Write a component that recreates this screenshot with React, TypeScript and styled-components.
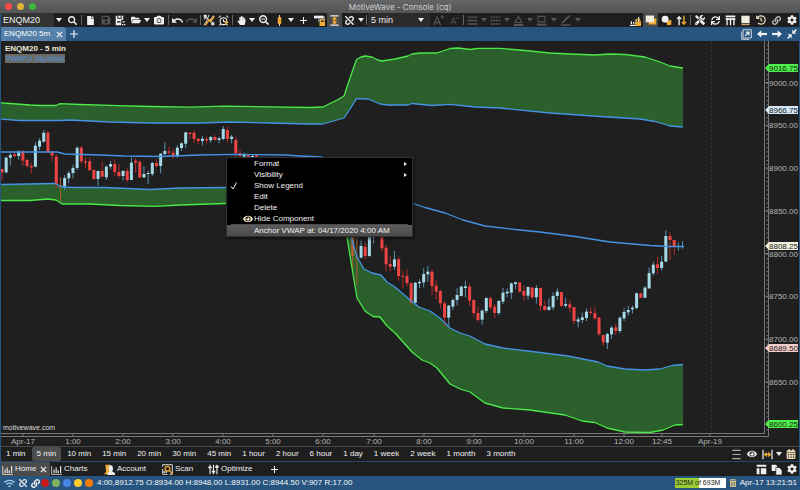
import React from "react";
import styled, { createGlobalStyle } from "styled-components";
import {
  FaSearch, FaSearchMinus, FaFile, FaSave, FaFolderOpen, FaCamera, FaHandPaper, FaTools,
  FaSync, FaHistory, FaLink, FaUnlink, FaCog, FaEye, FaTrashAlt, FaWifi, FaCalendarAlt,
} from "react-icons/fa";
import { MdUndo, MdRedo } from "react-icons/md";

const GlobalStyle = createGlobalStyle`
  * { box-sizing: border-box; }
  html, body { margin: 0; background: #1f1f1f; }
  body, button, input, select { font-family: "Liberation Sans", Arial, sans-serif; font-size: 8px; line-height: 10px; color: #f0f0f0; }
  button { border: 0; padding: 0; background: none; }
`;

const BLUE = "#28557f";
const AMBER = "#f0ab35";

const Window = styled.div`
  display: flex;
  flex-direction: column;
  min-height: 100vh;
  overflow: hidden;
`;

const TitleBar = styled.header`
  display: grid;
  grid-template-columns: 1fr auto 1fr;
  align-items: center;
  height: 13px;
  padding: 0 5px;
  background: linear-gradient(#636567, #525456);
`;

const TrafficLights = styled.div`
  display: flex;
  gap: 5px;
`;

const Light = styled.button<{ $color: string }>`
  width: 7px;
  height: 7px;
  border-radius: 50%;
  background: ${(p) => p.$color};
`;

const Title = styled.h1`
  margin: 0;
  font: 400 8px/12px Inter, sans-serif;
  color: #d0d0d0;
`;

const Body = styled.main`
  flex: 1;
  display: flex;
  flex-direction: column;
  border: solid ${BLUE};
  border-width: 0 1px;
`;

const Bar = styled.div<{ $height: number; $bg?: string; $line?: string }>`
  display: flex;
  align-items: stretch;
  flex: none;
  height: ${(p) => p.$height}px;
  background: ${(p) => p.$bg ?? "#1e1e1e"};
  border-top: ${(p) => (p.$line ? `1px solid ${p.$line}` : "0")};
`;

const Spacer = styled.div`
  flex: 1;
`;

const ToolButton = styled.button<{ $w?: number; $active?: boolean; $dim?: boolean }>`
  display: flex;
  align-items: center;
  justify-content: center;
  flex: none;
  width: ${(p) => p.$w ?? 15}px;
  background: ${(p) => (p.$active ? "#4b4b4b" : "none")};
  color: ${(p) => (p.$dim ? "#555" : "#f0f0f0")};
`;

const Divider = styled.span`
  flex: none;
  width: 1px;
  margin: 2px 1px;
  background: #666;
`;

const SymbolInput = styled.input`
  width: 53px;
  border: 0;
  padding: 0 2px;
  background: #333;
  font-size: 9px;
`;

const SelectWrap = styled.label`
  display: grid;
  grid-template-columns: 1fr 12px;
  align-items: center;
  width: 62px;
  background: #2b2b2b;
`;

const Select = styled.select`
  grid-area: 1 / 1 / 2 / 3;
  appearance: none;
  border: 0;
  padding: 0 3px;
  height: 14px;
  background: transparent;
  font-size: 9px;
`;

const SelectCaret = styled.span`
  grid-area: 1 / 2;
  display: flex;
  pointer-events: none;
`;

const DocTab = styled.div`
  display: flex;
  align-items: center;
  justify-content: space-between;
  width: 65px;
  padding: 0 3px;
  background: #5580a9;
  border-radius: 0 3px 0 0;
`;

const TabLabel = styled.button`
  color: #fff;
`;

const CloseButton = styled.button`
  display: flex;
  align-items: center;
`;

const ChartPane = styled.section`
  position: relative;
  background: #1f1f1f;
`;

const ChartSvg = styled.svg`
  display: block;
  width: 100%;
  height: auto;
`;

const Legend = styled.div`
  position: absolute;
  left: 4px;
  top: 3px;
  display: flex;
  flex-direction: column;
  align-items: flex-start;
`;

const LegendTitle = styled.strong`
  color: #eee8d8;
`;

const LegendStudy = styled.span`
  padding: 0 1px;
  font-size: 7px;
  line-height: 9px;
  background: #6b6b64;
  color: #4a90dd;
`;

const Menu = styled.ul`
  position: absolute;
  left: 225px;
  top: 116px;
  width: 187px;
  margin: 0;
  padding: 0;
  list-style: none;
  background: #000;
  border: 1px solid #303030;
  box-shadow: 1px 2px 3px #0008;
`;

const MenuSeparator = styled.li`
  height: 1px;
  margin: 0 4px;
  background: #4c4c4c;
`;

const MenuButton = styled.button<{ $hot?: boolean }>`
  display: grid;
  grid-template-columns: 14px 13px 1fr 8px;
  align-items: center;
  width: 100%;
  height: 11px;
  text-align: left;
  background: ${(p) => (p.$hot ? "linear-gradient(#5c5c5c, #4a4a4a)" : "none")};
`;

const MenuIcon = styled.span`
  display: flex;
  justify-content: center;
`;

const FrameButton = styled.button<{ $active?: boolean }>`
  padding: 0 5px;
  margin-right: 1px;
  border-radius: 2px;
  color: #f0f0f0;
  background: ${(p) => (p.$active ? "#4d4d4d" : "none")};
`;

const PageTab = styled.div<{ $w: number; $active?: boolean }>`
  display: flex;
  align-items: center;
  gap: 2px;
  width: ${(p) => p.$w}px;
  padding: 0 3px 0 1px;
  background: ${(p) => (p.$active ? "#4b4b4b" : "none")};
`;

const PageTabLabel = styled.button`
  flex: 1;
  display: flex;
  align-items: center;
  gap: 2px;
`;

const Dots = styled.div`
  display: flex;
  align-items: center;
  gap: 3px;
  margin-right: 4px;
`;

const Dot = styled.button<{ $color: string }>`
  width: 8px;
  height: 8px;
  border-radius: 50%;
  background: ${(p) => p.$color};
`;

const StatusText = styled.span`
  align-self: center;
  padding-right: 2px;
  white-space: nowrap;
  color: #f4f7fa;
`;

const Memory = styled.div`
  align-self: center;
  width: 51px;
  height: 10px;
  padding-left: 1px;
  font-size: 7px;
  color: #222;
  background: linear-gradient(90deg, #9acd32 47%, #fff 47%);
`;

/* ---------- icons ---------- */

const Glyph = ({ size = 11, children }: { size?: number; children: React.ReactNode }) => (
  <svg width={size} height={size} viewBox="0 0 16 16" fill="none" stroke="currentColor" strokeWidth="2" aria-hidden>
    {children}
  </svg>
);

const Caret = () => (
  <svg width="6" height="4" viewBox="0 0 6 4" fill="currentColor" aria-hidden><path d="M0 0H6L3 4Z" /></svg>
);
const Cross = () => <Glyph size={7}><path d="M2 2L14 14M14 2L2 14" strokeWidth="3" /></Glyph>;
const Plus = ({ size = 8 }: { size?: number }) => <Glyph size={size}><path d="M8 0V16M0 8H16" strokeWidth="2.4" /></Glyph>;
const Lock = () => (
  <>
    <path d="M9.5 11V8.5a2.5 2.5 0 0 1 5 0V11" stroke={AMBER} strokeWidth="1.6" />
    <path d="M8 10h8v6H8z" fill={AMBER} stroke="none" />
  </>
);
const SaveAs = () => (
  <Glyph>
    <path d="M1 1h11v6H9v8H1z" fill="currentColor" stroke="none" />
    <path d="M4 1v4h5V1" stroke="#1e1e1e" strokeWidth="1.4" />
    <path d="M3 10h5" stroke="#1e1e1e" />
    <path d="M10 14h2M13 14h2M11 10h3" />
  </Glyph>
);
const Wand = () => (
  <Glyph size={12}>
    <path d="M1 2L15 13M1 7L5 5M8 1L5 9L1 15M14 2L9 9" stroke="#ddd" strokeWidth="1.3" />
    <path d="M3 15L8 8L10 10L15 3" stroke={AMBER} strokeWidth="2" />
    <path d="M1 1h4v4H1zM11 11h4v4h-4z" fill="#ddd" stroke="none" />
  </Glyph>
);
const Alarm = () => (
  <Glyph>
    <circle cx="8" cy="9" r="5" strokeWidth="1.5" />
    <path d="M8 6V9.5H11M1 4L4 1M12 1L15 4M4 13L2 15M12 13L14 15" strokeWidth="1.5" />
    <path d="M12 8v6M9.5 11H15" stroke={AMBER} strokeWidth="1.6" />
  </Glyph>
);
const CandleIcon = () => (
  <Glyph><path d="M8 0V16" stroke="#ddd" strokeWidth="1.4" /><path d="M5.5 3h5v10h-5z" fill={AMBER} stroke="none" /></Glyph>
);
const PaintLock = () => (
  <Glyph>
    <path d="M0 1h14v4H0z" fill="#eee" stroke="none" />
    <path d="M14 3h2v4H7v3" stroke="#ddd" strokeWidth="1.4" />
    <Lock />
  </Glyph>
);
const FitVertical = () => (
  <Glyph>
    <path d="M2 1.2H14M2 14.8H14" strokeWidth="1.8" />
    <path d="M8 4V12" stroke={AMBER} strokeWidth="2.4" />
    <path d="M8 2L12 6.5H4ZM8 14L12 9.5H4Z" fill={AMBER} stroke="none" />
  </Glyph>
);
const Lines = ({ dash }: { dash?: string }) => (
  <Glyph><path d="M1 3H15M1 8H15M1 13H15" strokeDasharray={dash} /></Glyph>
);
const Triangle = () => <Glyph><path d="M8 2L13 11H3Z" strokeWidth="1.6" /><path d="M1 14.5H15" strokeWidth="3" /></Glyph>;
const FillBox = () => <Glyph><path d="M3 2h10v8H3z" strokeWidth="1.6" /><path d="M1 14H15" strokeWidth="3" /></Glyph>;
const Pen = () => <Glyph><path d="M14 1L6 9L3 12" strokeWidth="2.5" /><path d="M1 14.5H15" strokeWidth="2" /></Glyph>;
const BarsIcon = () => (
  <Glyph><path d="M1 3V15H16" strokeWidth="1.2" /><path d="M4.5 13V8M7.5 13V5M10.5 13V9M14 13V3" strokeWidth="1.6" /></Glyph>
);
const BarsLock = () => (
  <Glyph><path d="M0 15H16M2 13V9M5.5 13V10M9 13V6M12.5 13V3" strokeWidth="1.8" /><Lock /></Glyph>
);
const Stack = () => (
  <Glyph size={12}>
    <path d="M5 6h10v8H5z" fill={AMBER} stroke="none" />
    <path d="M1 2h11v9H1z" fill="#f0ece0" stroke="none" />
  </Glyph>
);
const Shapes = () => (
  <Glyph>
    <path d="M8 9l7-2v7l-6 1z" fill={AMBER} stroke="none" />
    <circle cx="6" cy="6" r="5" fill="#eee" stroke="none" />
  </Glyph>
);
const UpDown = () => (
  <Glyph>
    <path d="M4.5 15V3M1.5 6L4.5 2.5L7.5 6" />
    <path d="M11.5 1V13M8.5 10L11.5 13.5L14.5 10" stroke={AMBER} />
  </Glyph>
);
const Columns = () => <Glyph><path d="M1 2H15M1 6H15" strokeWidth="2.2" /><path d="M3 4V15M8 4V15M13 4V15" strokeWidth="2" /></Glyph>;
const Page = () => (
  <Glyph><path d="M2 1h12v11H2z" fill="#f0ece0" stroke="none" /><path d="M2 14H14" stroke="#d8b070" strokeWidth="1.6" /></Glyph>
);
const PopOut = () => <Glyph><path d="M3 1h12v12H3zM1 4V15H12" strokeWidth="1.2" /><path d="M6 10L11 5M7 4.5H11.5V9" strokeWidth="1.8" /></Glyph>;
const Arrow = ({ left }: { left?: boolean }) => (
  <Glyph size={10}>
    <path d={left ? "M16 8H4" : "M0 8H12"} strokeWidth="3.5" />
    <path d={left ? "M7 2L0 8L7 14Z" : "M9 2L16 8L9 14Z"} fill="currentColor" stroke="none" />
  </Glyph>
);
const Collapse = () => (
  <Glyph size={10}>
    <path d="M15 1L10 6M1 15L6 10" strokeWidth="2.4" />
    <path d="M8.5 1V7.5H15ZM7.5 15V8.5H1Z" fill="currentColor" stroke="none" />
  </Glyph>
);
const FitWidth = () => (
  <Glyph>
    <path d="M1.5 1V15M14.5 1V15" strokeWidth="1.8" />
    <path d="M4 8H12" stroke={AMBER} />
    <path d="M2.5 8L7 4V12ZM13.5 8L9 4V12Z" fill={AMBER} stroke="none" />
  </Glyph>
);
const Bust = () => (
  <Glyph>
    <path d="M2 1h7v10l3 4H0l3-4z" fill={AMBER} stroke="none" />
    <path d="M8 2c3-1 5 1 5 4s-1 4-1 5l4 2v3H5v-3l3-2c-1-3-2-7 0-9z" fill="#eee" stroke="none" />
  </Glyph>
);
const ScanIcon = () => (
  <Glyph>
    <path d="M1 4V1H15V15H11M1 7V15H8" strokeWidth="1.3" />
    <path d="M3 13V10M6 13V9" stroke="#ddd" />
    <circle cx="8" cy="7" r="3.5" stroke={AMBER} strokeWidth="1.8" />
    <path d="M10.5 9.5L15 14" stroke={AMBER} />
  </Glyph>
);
const Sliders = () => (
  <Glyph><path d="M3 1V15M8 1V15M13 1V15" strokeWidth="1.6" /><path d="M0.5 5H5.5M5.5 11H10.5M10.5 4H15.5" strokeWidth="2.6" /></Glyph>
);
const LayoutIcon = () => (
  <Glyph><path d="M1 1h14v3H1zM1 6h4v9H1zM7 6h8v9H7z" fill="currentColor" stroke="none" /></Glyph>
);
const Copies = () => (
  <Glyph>
    <path d="M1 1h6l2 2v7H1z" fill="currentColor" stroke="none" />
    <path d="M7 5h5l4 4v7H7z" fill="currentColor" stroke="#1e1e1e" strokeWidth="1" />
  </Glyph>
);
const LetterSize = ({ size, larger }: { size: number; larger?: boolean }) => (
  <Glyph size={size}>
    <path d="M1 15L6 3L11 15M3 11H9" strokeWidth="1.7" />
    <path d={larger ? "M11 3H16M13.5 0.5V5.5" : "M11 4H16"} strokeWidth="1.5" />
  </Glyph>
);

/* ---------- chart ---------- */

const BAR_STEP = 4.175;
const barX = (i: number) => 2 + i * BAR_STEP;

type Candle = [dir: "u" | "d" | "o", top: number, bottom: number, high: number, low: number];
type Session = { first: number; base: number; candles: Candle[] };

// Candle values are thirds of a chart unit below the session's base line.
const SESSIONS: Session[] = [
  {
    first: 0,
    base: 90,
    candles: [
      ["d", 237, 247, 237, 270], ["u", 203, 247, 200, 250], ["u", 195, 203, 190, 227], ["d", 193, 198, 186, 203],
      ["u", 185, 198, 180, 210], ["d", 185, 212, 180, 228], ["d", 210, 228, 205, 233], ["d", 228, 232, 218, 250],
      ["u", 167, 230, 157, 232], ["u", 152, 170, 145, 180], ["u", 128, 155, 120, 158], ["d", 128, 186, 122, 190],
      ["d", 187, 197, 182, 213], ["d", 200, 283, 192, 295], ["o", 285, 290, 262, 338], ["u", 264, 290, 255, 300],
      ["u", 249, 265, 242, 280], ["u", 234, 249, 224, 265], ["u", 173, 234, 169, 240], ["d", 173, 214, 168, 220],
      ["d", 214, 218, 202, 235], ["d", 214, 241, 202, 243], ["d", 240, 267, 237, 270], ["u", 243, 267, 243, 287],
      ["d", 243, 260, 215, 262], ["u", 230, 262, 226, 270], ["u", 222, 230, 213, 238], ["d", 222, 246, 208, 258],
      ["d", 246, 258, 222, 262], ["u", 243, 258, 240, 272], ["d", 243, 270, 235, 277], ["u", 218, 270, 202, 270],
      ["d", 212, 218, 204, 248], ["d", 216, 262, 210, 265], ["u", 252, 262, 228, 265], ["u", 249, 252, 242, 282],
      ["u", 219, 252, 215, 258], ["d", 219, 228, 208, 233], ["u", 191, 228, 190, 250], ["u", 183, 192, 157, 195],
      ["d", 184, 188, 169, 195], ["d", 188, 198, 176, 206], ["u", 173, 198, 166, 203], ["u", 160, 174, 158, 183],
      ["u", 127, 161, 126, 175], ["d", 128, 132, 128, 147], ["d", 128, 147, 120, 158], ["d", 146, 153, 144, 163],
      ["u", 146, 153, 138, 167], ["d", 147, 151, 140, 160], ["u", 141, 151, 138, 158], ["d", 141, 150, 135, 152],
      ["u", 145, 150, 140, 160], ["u", 117, 147, 108, 150], ["d", 120, 147, 110, 158], ["u", 140, 147, 134, 160],
      ["d", 150, 190, 140, 202], ["d", 190, 198, 180, 206], ["u", 194, 200, 188, 206], ["d", 196, 202, 192, 206],
      ["u", 198, 202, 196, 206], ["d", 196, 204, 192, 208],
    ],
  },
  {
    first: 84,
    base: 220,
    candles: [
      ["o", 50, 108, 50, 150], ["o", 112, 116, 50, 195], ["u", 78, 113, 62, 115], ["d", 80, 108, 68, 118],
      ["u", 50, 108, 45, 110], ["u", 45, 52, 40, 70], ["d", 30, 48, 30, 52], ["d", 45, 85, 40, 95],
      ["d", 83, 133, 75, 155], ["d", 132, 140, 110, 155], ["u", 118, 140, 93, 150], ["d", 118, 168, 110, 183],
      ["d", 167, 170, 153, 205], ["d", 168, 190, 148, 200], ["d", 190, 248, 188, 255], ["u", 188, 248, 186, 250],
      ["u", 186, 190, 178, 205], ["u", 162, 187, 145, 202], ["u", 155, 163, 138, 185], ["d", 155, 198, 148, 225],
      ["d", 197, 215, 180, 238], ["d", 213, 250, 210, 265], ["d", 250, 293, 243, 318], ["u", 257, 293, 255, 320],
      ["u", 240, 260, 235, 270], ["u", 225, 240, 205, 257], ["u", 200, 228, 197, 230], ["u", 199, 204, 182, 232],
      ["d", 200, 242, 190, 258], ["d", 240, 279, 237, 290], ["d", 279, 300, 260, 305], ["u", 272, 299, 268, 314],
      ["u", 234, 273, 232, 280], ["d", 235, 262, 230, 268], ["d", 260, 279, 252, 294], ["u", 243, 279, 240, 286],
      ["u", 218, 245, 203, 252], ["u", 215, 220, 205, 232], ["u", 190, 218, 188, 237], ["u", 187, 192, 185, 208],
      ["d", 187, 215, 187, 217], ["d", 213, 227, 197, 242], ["u", 201, 227, 200, 238], ["d", 203, 232, 200, 237],
      ["u", 204, 232, 195, 250], ["d", 204, 258, 204, 272], ["d", 258, 270, 242, 272], ["u", 260, 270, 235, 272],
      ["u", 228, 262, 217, 270], ["u", 215, 228, 205, 240], ["d", 216, 258, 216, 262], ["u", 252, 257, 233, 263],
      ["d", 253, 263, 240, 278], ["d", 261, 303, 261, 312], ["u", 298, 305, 290, 322], ["u", 292, 300, 278, 310],
      ["u", 275, 294, 265, 303], ["d", 275, 279, 260, 283], ["d", 279, 295, 260, 300], ["d", 293, 343, 290, 347],
      ["d", 345, 367, 345, 378], ["u", 342, 368, 338, 387], ["u", 323, 343, 318, 357], ["d", 322, 333, 312, 345],
      ["u", 293, 333, 290, 340], ["u", 276, 295, 265, 303], ["u", 270, 277, 258, 287], ["u", 263, 268, 257, 280],
      ["u", 220, 264, 217, 268], ["d", 220, 234, 218, 234], ["u", 203, 233, 198, 235], ["u", 159, 205, 142, 207],
      ["u", 134, 160, 125, 167], ["d", 133, 144, 110, 163], ["u", 125, 144, 108, 152], ["u", 48, 125, 30, 125],
      ["d", 48, 60, 36, 120], ["d", 60, 80, 58, 105], ["u", 78, 80, 68, 92], ["u", 78, 80, 63, 86],
    ],
  },
];

const CANDLE_FILL = { u: "#a6d9e6", d: "#ee4444", o: "#b0622c" };
const CANDLE_WICK = { u: "#5d93ad", d: "#b52a2a", o: "#a5602c" };

const UPPER_OUTER = "0,102.7 10,103.5 30,105 40,105.5 56,105.5 60,103.7 80,104.5 110,105.3 150,106.5 190,107.2 225,106.2 270,106.8 310,107.5 323,107 338,99.5 344,96 350,78 356.5,59.5 361,57 365,56 372,57 378,60 382,61 395,59 408,56 412,54 420,53 437,53 450,48.5 458,48 470,49.5 478,48.3 500,48.3 530,51 550,53 570,54 595,55 610,54 625,54.5 645,57 660,62 670,66 683,68";
const UPPER_INNER = "0,119 20,120.5 60,120.5 70,120 110,122 150,123 200,123 230,122 270,123 310,124 323,124 344,118 350,109 356.5,98.7 368,99 380,104 388,105 408,105 412,103.5 432,105.5 450,104.3 475,107 500,108 550,113 600,116.5 640,119 655,121.5 670,126 683,127";
const MIDDLE = "0,152 57,152 65,154 100,155 125,156 160,156.5 200,155 235,154.3 285,155 300,156 322,157 340,164 360,180 390,196 413,203.5 425,207.5 445,213 463,220 485,226 520,230 540,232 575,236.5 610,242 650,245.5 668,246.5 684,246.5";
const LOWER_INNER = "0,184.5 55,183.5 62,187 75,187.5 105,187.5 150,189.5 180,188 225,187.5 310,186 330,195 344,215 352,240 357,257 364,269 372,273 381,275 387,282 395,287 410,300 419,307 430,311 440,318 450,328 460,333 470,336 485,344 503,348 540,352.5 568,356 598,362 607,366 625,369 645,370 660,369 672,365.5 683,364.5";
const LOWER_OUTER = "0,200.5 30,200.5 48,199 56,200 62,204 90,204 120,205.5 155,206.3 180,205 225,203.5 310,202 330,210 340,222 347,237 352,268 357,298 365,311 373,316.5 380,317 387,326 395,333 412,352 422,360 430,363 437,368 450,384 460,389 470,392 485,403 503,408 530,410 565,415 582,421 595,422.5 607,428 625,432 650,432.5 663,430 675,425 683,424.5";

const reversed = (points: string) => points.split(" ").reverse().join(" ");

const PRICES = [9000, 8950, 8900, 8850, 8800, 8750, 8700, 8650];
const priceY = (price: number) => 253.5 - (price - 8800) * 0.855;
const MINOR_TICKS = Array.from({ length: 91 }, (_, i) => 45 + i * 4.275);

const PRICE_TAGS: [text: string, y: number, fill: string][] = [
  ["9016.75", 68, "#4df04a"],
  ["8966.75", 110, "#d3e6f5"],
  ["8808.25", 246, "#f0efdc"],
  ["8689.50", 348, "#f5cdcb"],
  ["8600.25", 424, "#4df04a"],
];

const TIMES: [label: string, x: number][] = [
  ["Apr-17", 23], ["1:00", 73], ["2:00", 123], ["3:00", 173], ["4:00", 223], ["5:00", 273], ["6:00", 323],
  ["7:00", 374], ["8:00", 424], ["9:00", 474], ["10:00", 524], ["11:00", 574], ["12:00", 624], ["12:45", 662],
  ["Apr-19", 710],
];

const Chart = () => (
  <ChartSvg viewBox="1 41 798 405" role="img" aria-label="ENQM20 5 minute price chart">
    <path d="M711.5 42V433" stroke="#333" strokeDasharray="2 2" />
    <polygon points={`${UPPER_OUTER} ${reversed(UPPER_INNER)}`} fill="#2b5f2c" />
    <polygon points={`${LOWER_INNER} ${reversed(LOWER_OUTER)}`} fill="#2b5f2c" />
    {SESSIONS.flatMap(({ first, base, candles }) =>
      candles.map(([dir, top, bottom, high, low], i) => {
        const x = barX(first + i);
        return (
          <g key={first + i}>
            <path d={`M${x} ${base + high / 3}V${base + low / 3}`} stroke={CANDLE_WICK[dir]} />
            <rect x={x - 1.5} y={base + top / 3} width={3} height={(bottom - top) / 3} fill={CANDLE_FILL[dir]} />
          </g>
        );
      }),
    )}
    <g fill="none" stroke="#4593e6" strokeWidth="1.3" strokeLinejoin="round">
      <polyline points={UPPER_INNER} />
      <polyline points={MIDDLE} />
      <polyline points={LOWER_INNER} />
    </g>
    <g fill="none" stroke="#4be848" strokeWidth="1.3" strokeLinejoin="round">
      <polyline points={UPPER_OUTER} />
      <polyline points={LOWER_OUTER} />
    </g>
    <g stroke="#777" fill="none">
      <path d="M1 433.5H764.5V41M1 436.5H768.5V41" />
      {MINOR_TICKS.map((y) => <path key={y} d={`M766.5 ${y}H768.5`} />)}
      {PRICES.map((p) => <path key={p} d={`M765 ${priceY(p)}H769`} />)}
      {TIMES.map(([label, x]) => <path key={label} d={`M${x} 434V437`} />)}
    </g>
    <g fill="#b4b4b4" fontSize="8">
      {PRICES.map((p) => <text key={p} x="769" y={priceY(p) + 3}>{p.toFixed(2)}</text>)}
      <g textAnchor="middle">
        {TIMES.map(([label, x]) => <text key={label} x={x} y="444">{label}</text>)}
      </g>
    </g>
    {PRICE_TAGS.map(([text, y, fill]) => (
      <g key={text} fontSize="8">
        <path d={`M765 ${y}L769 ${y - 4}H798V${y + 4}H769Z`} fill={fill} />
        <text x="769" y={y + 3} fill="#1c1c1c">{text}</text>
      </g>
    ))}
    <text x="3" y="430" fontSize="7" fill="#ddd">motivewave.com</text>
  </ChartSvg>
);

/* ---------- bars ---------- */

const Tool = ({ label, children, ...rest }: {
  label: string; children: React.ReactNode; $w?: number; $active?: boolean; $dim?: boolean;
}) => <ToolButton aria-label={label} {...rest}>{children}</ToolButton>;

const Toolbar = () => (
  <Bar $height={14} role="toolbar">
    <SymbolInput aria-label="Symbol" defaultValue="ENQM20" />
    <Tool label="Symbol list" $w={10}><Caret /></Tool>
    <Tool label="Search" $w={16}><FaSearch size={9} /></Tool>
    <Divider />
    <Tool label="New"><FaFile size={9} /></Tool>
    <Tool label="Save" $dim><FaSave size={10} /></Tool>
    <Tool label="Save as"><SaveAs /></Tool>
    <Tool label="Open"><FaFolderOpen size={10} /></Tool>
    <Tool label="Recent" $w={8}><Caret /></Tool>
    <Tool label="Snapshot" $w={16}><FaCamera size={10} /></Tool>
    <Divider />
    <Tool label="Undo" $w={14}><MdUndo size={13} /></Tool>
    <Tool label="Redo" $dim><MdRedo size={13} /></Tool>
    <Divider />
    <Tool label="Studies" $w={14}><Wand /></Tool>
    <Tool label="Alerts"><Alarm /></Tool>
    <Divider />
    <Tool label="Pan" $w={14}><FaHandPaper size={9} /></Tool>
    <Tool label="Cursor modes" $w={8}><Caret /></Tool>
    <Tool label="Zoom out" $w={16}><FaSearchMinus size={10} /></Tool>
    <Tool label="Bar type"><CandleIcon /></Tool>
    <Tool label="Bar types" $w={8}><Caret /></Tool>
    <Tool label="Crosshair" $w={16}><Plus size={7} /></Tool>
    <Tool label="Lock style" $w={16}><PaintLock /></Tool>
    <Tool label="Fit vertically" $active><FitVertical /></Tool>
    <Tool label="Unlink"><FaUnlink size={9} /></Tool>
    <Tool label="Link options" $w={8}><Caret /></Tool>
    <Divider />
    <SelectWrap>
      <Select aria-label="Bar size" defaultValue="5 min"><option>5 min</option></Select>
      <SelectCaret><Caret /></SelectCaret>
    </SelectWrap>
    <Tool label="Larger text" $w={17} $dim><LetterSize size={11} larger /></Tool>
    <Tool label="Smaller text" $dim><LetterSize size={9} /></Tool>
    <Divider />
    <Tool label="Line width" $w={14} $dim><Lines /></Tool>
    <Tool label="Line widths" $w={9} $dim><Caret /></Tool>
    <Tool label="Line style" $w={14} $dim><Lines dash="3 1" /></Tool>
    <Tool label="Line styles" $w={9} $dim><Caret /></Tool>
    <Tool label="Text color" $w={14} $dim><Triangle /></Tool>
    <Tool label="Text colors" $w={9} $dim><Caret /></Tool>
    <Tool label="Fill color" $dim><FillBox /></Tool>
    <Tool label="Fill colors" $w={9} $dim><Caret /></Tool>
    <Tool label="Line color" $dim><Pen /></Tool>
    <Tool label="Line colors" $w={9} $dim><Caret /></Tool>
    <Spacer />
    <Tool label="Lock chart"><BarsLock /></Tool>
    <Tool label="Layers" $active><Stack /></Tool>
    <Tool label="Shapes" $w={16}><Shapes /></Tool>
    <Tool label="Trade"><UpDown /></Tool>
    <Divider />
    <Tool label="Tools"><FaTools size={10} /></Tool>
    <Tool label="Refresh" $w={16}><FaSync size={9} /></Tool>
    <Tool label="Data table"><Columns /></Tool>
    <Tool label="Notes"><Page /></Tool>
    <Tool label="Replay" $w={16}><FaHistory size={10} color="#e8dcc4" /></Tool>
    <Tool label="Link"><FaLink size={9} color="#bbb" /></Tool>
    <Tool label="Settings"><FaCog size={10} /></Tool>
  </Bar>
);

const MENU_ITEMS: { text: string; check?: boolean; eye?: boolean; sub?: boolean }[] = [
  { text: "Format", sub: true },
  { text: "Visibility", sub: true },
  { text: "Show Legend", check: true },
  { text: "Edit" },
  { text: "Delete" },
  { text: "Hide Component", eye: true },
];

const ContextMenu = () => (
  <Menu role="menu">
    {MENU_ITEMS.map(({ text, check, eye, sub }) => (
      <li key={text} role="none">
        <MenuButton role="menuitem">
          <MenuIcon>{check && <Glyph size={8}><path d="M2 9L6 14L13 1" strokeWidth="2" /></Glyph>}</MenuIcon>
          <MenuIcon>{eye && <FaEye size={10} color="#f4e6c8" />}</MenuIcon>
          {text}
          {sub && <svg width="3" height="4" viewBox="0 0 3 4" fill="#eee" aria-hidden><path d="M0 0L3 2L0 4Z" /></svg>}
        </MenuButton>
      </li>
    ))}
    <MenuSeparator role="separator" />
    <li role="none">
      <MenuButton role="menuitem" $hot>
        <MenuIcon /><MenuIcon />
        Anchor VWAP at: 04/17/2020 4:00 AM
      </MenuButton>
    </li>
  </Menu>
);

const FRAMES = ["1 min", "5 min", "10 min", "15 min", "20 min", "30 min", "45 min", "1 hour", "2 hour", "6 hour", "1 day", "1 week", "2 week", "1 month", "3 month"];

const PAGES = [
  { name: "Home", w: 49, icon: <BarsIcon />, active: true },
  { name: "Charts", w: 53, icon: <BarsIcon /> },
  { name: "Account", w: 58, icon: <Bust /> },
  { name: "Scan", w: 46, icon: <ScanIcon /> },
  { name: "Optimize", w: 60, icon: <Sliders /> },
];

const LINK_COLORS = [["red", "#cc1b1b"], ["green", "#7fb25a"], ["blue", "#4a86e8"], ["yellow", "#ffcb2e"], ["orange", "#f57c00"]];

export default function App() {
  return (
    <Window>
      <GlobalStyle />
      <TitleBar>
        <TrafficLights>
          <Light $color="#fb4a47" aria-label="Close window" />
          <Light $color="#e3b23c" aria-label="Minimize window" />
          <Light $color="#3fb83a" aria-label="Zoom window" />
        </TrafficLights>
        <Title>MotiveWave - Console (cq)</Title>
      </TitleBar>
      <Body>
        <Toolbar />
        <Bar $height={14} $bg={BLUE}>
          <DocTab>
            <TabLabel>ENQM20 5m</TabLabel>
            <CloseButton aria-label="Close tab"><Cross /></CloseButton>
          </DocTab>
          <Tool label="Add tab" $w={16}><Plus /></Tool>
          <Spacer />
          <Tool label="Pop out"><PopOut /></Tool>
          <Tool label="Previous"><Arrow left /></Tool>
          <Tool label="Next"><Arrow /></Tool>
          <Tool label="Collapse"><Collapse /></Tool>
        </Bar>
        <ChartPane>
          <Chart />
          <Legend>
            <LegendTitle>ENQM20 - 5 min</LegendTitle>
            <LegendStudy>VWAP(1 day,false)</LegendStudy>
          </Legend>
          <ContextMenu />
        </ChartPane>
        <Bar $height={15} $line="#484848">
          {FRAMES.map((f) => <FrameButton key={f} $active={f === "5 min"}>{f}</FrameButton>)}
          <Spacer />
          <Tool label="List" $w={16}><Glyph><path d="M2 2H14M2 8H14M2 14H14" stroke="#aaa" strokeWidth="1.8" /></Glyph></Tool>
          <Tool label="Show"><FaEye size={10} /></Tool>
          <Tool label="Fit width" $w={16}><FitWidth /></Tool>
          <Tool label="Width options" $w={8}><Caret /></Tool>
          <Tool label="Go to date" $w={16}><FaCalendarAlt size={10} color="#ead9b8" /></Tool>
        </Bar>
        <Bar $height={15} $line="#234869">
          {PAGES.map(({ name, w, icon, active }) => (
            <PageTab key={name} $w={w} $active={active}>
              <PageTabLabel>{icon}{name}</PageTabLabel>
              {active && <CloseButton aria-label="Close page"><Cross /></CloseButton>}
            </PageTab>
          ))}
          <Tool label="Add page" $w={14}><Plus size={7} /></Tool>
          <Spacer />
          <Tool label="Layout" $w={16}><LayoutIcon /></Tool>
          <Tool label="Duplicate"><Copies /></Tool>
          <Tool label="Page settings"><FaCog size={10} /></Tool>
        </Bar>
        <Bar as="footer" $height={14} $bg={BLUE}>
          <Tool label="Connection" $w={16}><FaWifi size={11} color="#9fd0ee" /></Tool>
          <Tool label="Unlink" $w={12}><FaUnlink size={8} /></Tool>
          <Tool label="Link" $w={12}><FaLink size={9} /></Tool>
          <Dots>
            {LINK_COLORS.map(([name, color]) => <Dot key={name} $color={color} aria-label={`Link ${name}`} />)}
          </Dots>
          <StatusText>4:00,8912.75 O:8934.00 H:8948.00 L:8931.00 C:8944.50 V:907 R:17.00</StatusText>
          <Spacer />
          <Memory>325M of 693M</Memory>
          <Tool label="Free memory" $w={14}><FaTrashAlt size={8} color="#d8c08c" /></Tool>
          <StatusText>Apr-17 13:21:51</StatusText>
        </Bar>
      </Body>
    </Window>
  );
}
